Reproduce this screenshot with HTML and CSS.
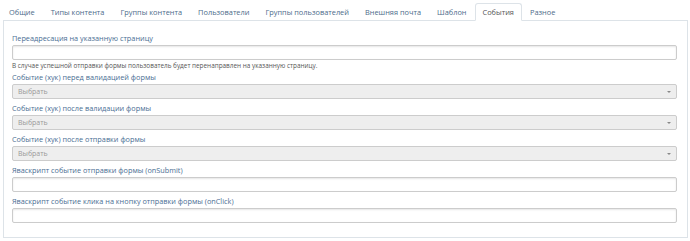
FILE: index.html
```html
<!DOCTYPE html>
<html lang="ru">
<head>
    <meta charset="UTF-8">
    <title>События</title>
    <link rel="stylesheet" href="styles.css">
</head>
<body>
    <div class="wrap">
        <ul class="tabs">
            <li>Общие</li>
            <li>Типы контента</li>
            <li>Группы контента</li>
            <li>Пользователи</li>
            <li>Группы пользователей</li>
            <li>Внешняя почта</li>
            <li>Шаблон</li>
            <li class="active">События</li>
            <li>Разное</li>
        </ul>
        <div class="panel">
            <div class="field">
                <label>Переадресация на указанную страницу</label>
                <div class="input"></div>
                <div class="help">В случае успешной отправки формы пользователь будет перенаправлен на указанную страницу.</div>
            </div>
            <div class="field">
                <label>Событие (хук) перед валидацией формы</label>
                <div class="select">Выбрать<span class="caret"></span></div>
            </div>
            <div class="field">
                <label>Событие (хук) после валидации формы</label>
                <div class="select">Выбрать<span class="caret"></span></div>
            </div>
            <div class="field">
                <label>Событие (хук) после отправки формы</label>
                <div class="select">Выбрать<span class="caret"></span></div>
            </div>
            <div class="field">
                <label>Яваскрипт событие отправки формы (onSubmit)</label>
                <div class="input"></div>
            </div>
            <div class="field">
                <label>Яваскрипт событие клика на кнопку отправки формы (onClick)</label>
                <div class="input"></div>
            </div>
        </div>
    </div>
</body>
</html>
```
FILE: styles.css
```css
body {
    margin: 0;
    background: #fff;
    font-family: "Open Sans", "Liberation Sans", sans-serif;
}
.wrap {
    padding: 3px 2px 0 3px;
}
.tabs {
    list-style: none;
    margin: 0;
    padding: 0;
    display: flex;
    border-bottom: 1px solid #dde3e8;
}
.tabs li {
    font-size: 7.4px;
    color: #4d6b8a;
    padding: 4px 7px 3px 7px;
    line-height: 9px;
    margin-bottom: -1px;
    border: 1px solid transparent;
    border-radius: 3px 3px 0 0;
}
.tabs li:first-child {
    padding-left: 5px;
}
.tabs li.active {
    color: #555;
    background: #fff;
    border-color: #dde3e8;
    border-bottom-color: #fff;
}
.panel {
    border: 1px solid #dde3e8;
    border-top: none;
    padding: 13px 10px 9px 8px;
}
.field {
    margin-bottom: 5px;
}
.field label {
    display: block;
    font-size: 7.3px;
    color: #4a6e93;
    line-height: 9px;
    margin-bottom: 2px;
}
.input {
    height: 13px;
    border: 1px solid #ccc;
    border-radius: 2px;
    background: #fff;
    box-shadow: inset 0 1px 2px rgba(0, 0, 0, 0.1);
}
.select {
    position: relative;
    height: 13px;
    line-height: 13px;
    border: 1px solid #ccc;
    border-radius: 2px;
    background: #eee;
    color: #999;
    font-size: 7px;
    padding-left: 5px;
}
.caret {
    position: absolute;
    right: 5px;
    top: 6px;
    border-left: 2px solid transparent;
    border-right: 2px solid transparent;
    border-top: 2px solid #888;
}
.help {
    font-size: 6.4px;
    color: #555;
    margin-top: 2px;
    line-height: 8px;
}
.field:first-child {
    margin-bottom: 3px;
}
```
